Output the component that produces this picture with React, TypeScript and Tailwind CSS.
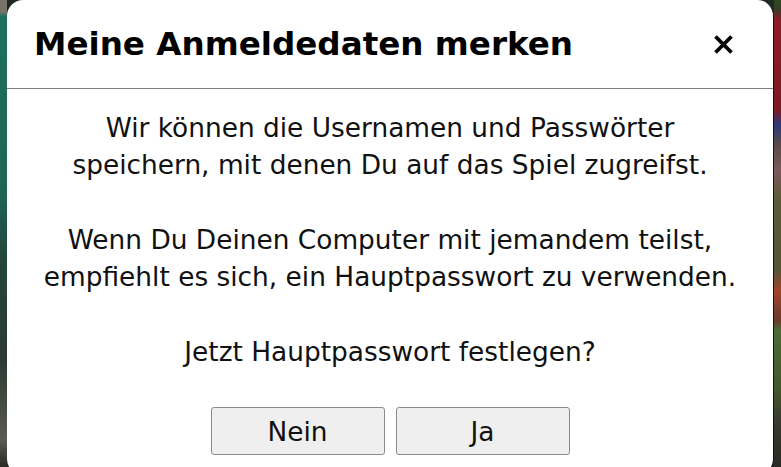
import React from "react";

// Modal asking whether to set a master password
export default function App() {
  const lines = {
    first: ["Wir können die Usernamen und Passwörter", "speichern, mit denen Du auf das Spiel zugreifst."],
    second: ["Wenn Du Deinen Computer mit jemandem teilst,", "empfiehlt es sich, ein Hauptpasswort zu verwenden."],
  };

  return (
    <div
      className="relative flex h-[467px] w-[781px] overflow-hidden bg-[#1c2a22]"
      style={{ fontFamily: '"DejaVu Sans", Verdana, sans-serif' }}
    >
      {/* game background peeking out at the edges */}
      <div className="w-[7px] shrink-0 bg-[linear-gradient(to_bottom,#77736b_0px,#77736b_12px,#1f6e5d_16px,#1d6656_190px,#23453b_260px,#2b3a33_360px,#5a5a52_440px,#2a2a26_467px)]" />
      <div className="w-[767px] shrink-0 self-start">
        <div className="flex h-[475px] flex-col rounded-[16px] border-r border-[#111] bg-white">
          <div className="flex h-[88px] items-center justify-between pl-[27px] pr-[39px]">
            <h1 className="text-[32.6px] font-bold text-black">Meine Anmeldedaten merken</h1>
            <button className="flex h-[20px] w-[21px] items-center justify-center" aria-label="Schließen">
              <svg width="21" height="19" viewBox="0 0 21 19">
                <path d="M2.5 1.5 L18.5 17.5 M18.5 1.5 L2.5 17.5" stroke="#000" strokeWidth="3.8" strokeLinecap="butt" />
              </svg>
            </button>
          </div>
          <div className="h-px bg-[#7f7f7f]" />
          <div className="flex flex-col items-center pt-[20px] text-center text-[26.4px] leading-[37.4px] text-[#111]">
            <p className="whitespace-nowrap">
              {lines.first[0]}
              <br />
              {lines.first[1]}
            </p>
            <p className="mt-[37px] whitespace-nowrap">
              {lines.second[0]}
              <br />
              {lines.second[1]}
            </p>
            <p className="mt-[37px] whitespace-nowrap">Jetzt Hauptpasswort festlegen?</p>
            <div className="mt-[37px] flex gap-[11px]">
              <button className="h-[48px] w-[174px] rounded-[3px] border border-[#8a8a8a] bg-[#efefef] pt-[2px] text-[26.4px] text-[#111]">
                Nein
              </button>
              <button className="h-[48px] w-[174px] rounded-[3px] border border-[#8a8a8a] bg-[#efefef] pt-[2px] text-[26.4px] text-[#111]">
                Ja
              </button>
            </div>
          </div>
        </div>
      </div>
      <div className="flex-1 bg-[linear-gradient(to_bottom,#2c4a22_0px,#3a3a2a_10px,#8c1c28_20px,#7a1a24_110px,#2a3a7a_125px,#5a4a4a_145px,#7a5a5a_170px,#5c5a3a_200px,#545436_270px,#a2442a_290px,#6a3a2a_320px,#4c6a34_330px,#42582e_390px,#3a3a2e_420px,#2a2a24_467px)]" />
    </div>
  );
}
